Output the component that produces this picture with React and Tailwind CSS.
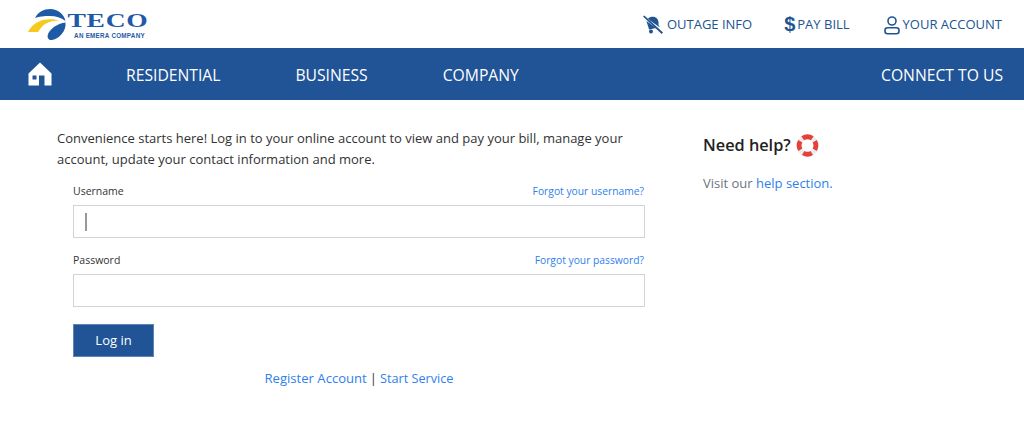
import React from 'react';

const font = "font-['Open_Sans','Noto_Sans',sans-serif]";

const Logo = () => (
  <div className="flex items-start">
    <svg width="44" height="36" viewBox="0 0 44 36" className="shrink-0">
      <path d="M7 11C10 5 16 2 22 2C30 2 36 7 37.500 14C33 10.500 28 9 22 9C16 9 11 9.500 7 11Z" fill="#1f5aa6" />
      <path d="M0 25C3 19 8 15 15 13C20 12 26 12 31 13.500C26 13.500 21 14.500 17 17C14 19 12 22 10 25Z" fill="#f6c91e" />
      <path d="M37.500 15.500C38.500 24 31 32 24 33C20 33.500 18.500 30 20.500 26C23 21 30 16.500 37.500 15.500Z" fill="#1f5aa6" />
    </svg>
    <div className="flex flex-col items-center ml-[1px] mt-[6px] w-[73px]">
      <span className="font-['Liberation_Serif',serif] font-bold text-[#1f5aa6] text-[19px] leading-[16px] tracking-[0.5px] -ml-[4px] [transform:scaleX(1.45)] origin-center">TECO</span>
      <span className="font-['Liberation_Sans',sans-serif] font-bold text-[#1f5aa6] text-[6.300px] leading-[8px] mt-[3px] tracking-[0.25px] whitespace-nowrap">AN EMERA COMPANY</span>
    </div>
  </div>
);

const OutageIcon = () => (
  <svg width="22" height="20" viewBox="0 0 22 20" fill="#20548f">
    <path d="M6 3.500C8 1.500 12 1 14.500 3C16.500 4.800 16.800 7.500 16.500 10L18 12.500L8 5.500Z" />
    <path d="M4.500 6L14 13L7 14.500C6.300 11 5 8.500 4.500 6Z" />
    <circle cx="9" cy="16.500" r="2" />
    <path d="M1 1.500L2.300 0.500L21 17.500L19.700 19Z" />
  </svg>
);

const UserIcon = () => (
  <svg width="16" height="19" viewBox="0 0 16 19" fill="none" stroke="#20548f" strokeWidth="1.600">
    <circle cx="8" cy="5" r="4" />
    <rect x="1" y="11.800" width="14" height="6" rx="2.500" />
  </svg>
);

const HomeIcon = () => (
  <svg width="24" height="24" viewBox="0 0 24 24" fill="#fff">
    <path fillRule="evenodd" d="M12 0.500L23.500 11.500V23.500H16.500V13.500H11V23.500H0.500V11.500ZM4.500 13.500V17.500H8.500V13.500Z" />
  </svg>
);

const LifeRing = () => (
  <svg width="23" height="23" viewBox="0 0 24 24" fill="none" strokeWidth="5">
    <circle cx="12" cy="12" r="9" stroke="#ececec" />
    <path d="M7 4.500A9 9 0 0 1 17 4.500" stroke="#e5403a" />
    <path d="M19.500 7.500A9 9 0 0 1 19.500 16.500" stroke="#e5403a" />
    <path d="M16.500 19.800A9 9 0 0 1 7.500 19.800" stroke="#e5403a" />
    <path d="M4.500 16.500A9 9 0 0 1 4.500 7.500" stroke="#e5403a" />
  </svg>
);

const Field = ({ label, link, caret }) => (
  <div>
    <div className="flex items-center justify-between h-[14px] mb-[7px] pr-[1px]">
      <label className="text-[10.500px] leading-[14px] text-[#333]">{label}</label>
      <a href="#" className="text-[10.300px] leading-[14px] text-[#2f80ed]">{link}</a>
    </div>
    <div className="h-[33px] border border-[#ced4da] bg-white flex items-center pl-[11px]">
      {caret && <div className="w-[2px] h-[18px] bg-[#999]" />}
    </div>
  </div>
);

export default function App() {
  return (
    <div className={`${font} w-[1024px] h-[437px] bg-white overflow-hidden`}>
      <header className="h-[48px] flex items-start justify-between pl-[28px] pr-[22px]">
        <div className="pt-[7px]"><Logo /></div>
        <nav className="flex items-center h-[46px] mt-[2px] text-[13px] text-[#20548f]">
          <a href="#" className="flex items-center gap-[3px]"><OutageIcon />OUTAGE INFO</a>
          <a href="#" className="flex items-center gap-[2px] ml-[32px]">
            <span className="font-['Liberation_Sans',sans-serif] font-bold text-[20px] leading-[20px] -mt-[3px]">$</span>PAY BILL
          </a>
          <a href="#" className="flex items-center gap-[3px] ml-[34px]"><UserIcon />YOUR ACCOUNT</a>
        </nav>
      </header>

      <nav className="h-[52px] bg-[#205496] text-white text-[15.700px] flex items-center pl-[28px] pr-[21px]">
        <HomeIcon />
        <div className="flex ml-[74px] gap-[75px] pt-[3px]">
          <a href="#">RESIDENTIAL</a>
          <a href="#">BUSINESS</a>
          <a href="#">COMPANY</a>
        </div>
        <a href="#" className="ml-auto pt-[3px]">CONNECT TO US</a>
      </nav>

      <main className="flex pl-[57px] pt-[28px]">
        <section className="w-[588px]">
          <p className="text-[13px] leading-[21px] text-[#333]">
            Convenience starts here! Log in to your online account to view and pay your bill, manage your account, update your contact information and more.
          </p>
          <form className="ml-[16px] mt-[14px] w-[572px] flex flex-col gap-[15px]">
            <Field label="Username" link="Forgot your username?" caret />
            <Field label="Password" link="Forgot your password?" />
          </form>
          <button className="ml-[16px] mt-[17px] w-[81px] h-[33px] bg-[#205496] border border-[#5d84b3] text-white text-[13px]">Log in</button>
          <div className="ml-[16px] w-[572px] mt-[11px] text-center text-[13px] leading-[20px] text-[#333]">
            <a href="#" className="text-[13.100px] text-[#2f80ed]">Register Account</a>
            <span className="mx-[3px]">|</span>
            <a href="#" className="text-[12.700px] text-[#2f80ed]">Start Service</a>
          </div>
        </section>
        <aside className="ml-[58px] pt-[5px]">
          <div className="flex items-center gap-[5px] h-[24px]">
            <h2 className="text-[16.300px] font-semibold text-[#222]">Need help?</h2>
            <LifeRing />
          </div>
          <p className="mt-[16px] text-[13px] leading-[20px] text-[#6c757d]">
            Visit our <a href="#" className="text-[#2f80ed]">help section.</a>
          </p>
        </aside>
      </main>
    </div>
  );
}
